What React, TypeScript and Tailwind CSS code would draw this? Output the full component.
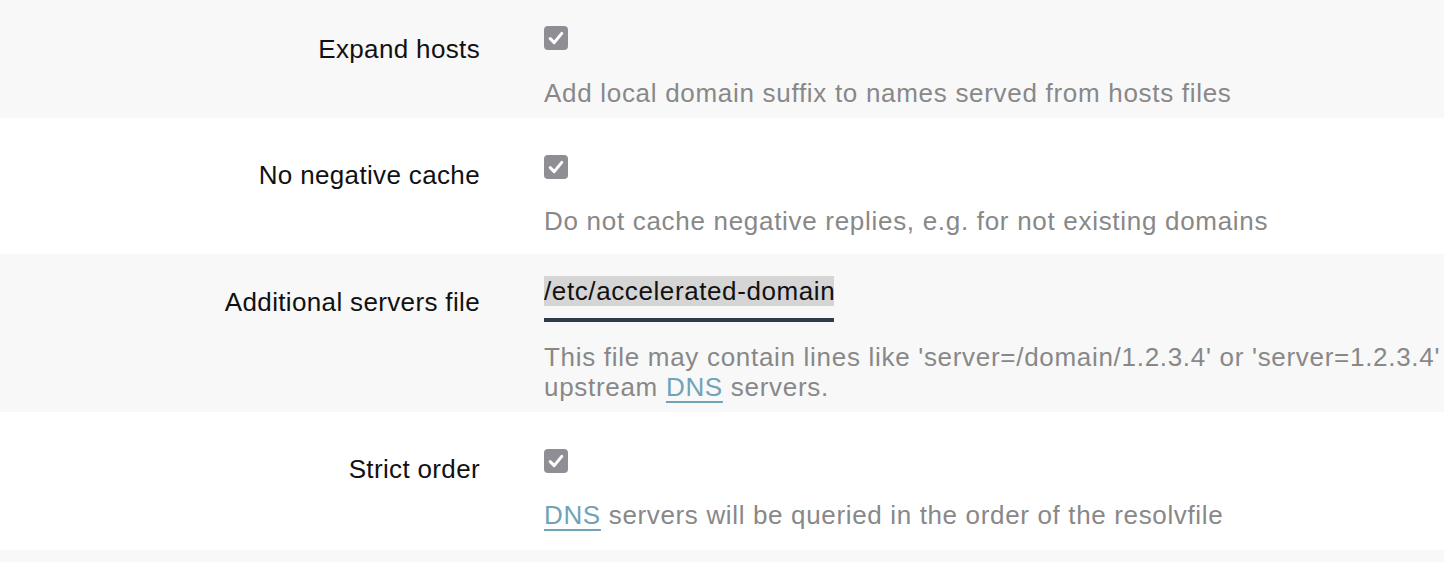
import React from "react";

const font = { fontFamily: '"Liberation Sans", Arial, sans-serif' };

function Check() {
  return (
    <div className="w-6 h-6 rounded-[4px] bg-[#8f8e94] flex items-center justify-center">
      <svg width="24" height="24" viewBox="0 0 24 24" fill="none">
        <path d="M6.2 12.6 L10.2 16.6 L17.8 7.4" stroke="#ffffff" strokeWidth="3" strokeLinecap="round" strokeLinejoin="round" />
      </svg>
    </div>
  );
}

function Label({ children, top }: { children: React.ReactNode; top: string }) {
  return (
    <div className={`w-[480px] shrink-0 text-right text-[26px] leading-[30px] text-[#111] tracking-[0.35px] ${top}`}>
      {children}
    </div>
  );
}

const Dns = () => <span className="text-[#6fa3b7] underline underline-offset-[5px] decoration-[1.5px]">DNS</span>;

export default function App() {
  return (
    <div className="w-[1444px] h-[562px] overflow-hidden bg-white" style={font}>
      {/* Row 1 */}
      <div className="flex bg-[#f8f8f8] h-[118px]">
        <Label top="mt-[34px]">Expand hosts</Label>
        <div className="ml-[64px] flex flex-col">
          <div className="mt-[26px]"><Check /></div>
          <div className="mt-[28px] text-[26px] leading-[30px] text-[#888] tracking-[0.7px] whitespace-nowrap">
            Add local domain suffix to names served from hosts files
          </div>
        </div>
      </div>
      {/* Row 2 */}
      <div className="flex bg-white h-[136px]">
        <Label top="mt-[42px]">No negative cache</Label>
        <div className="ml-[64px] flex flex-col">
          <div className="mt-[37px]"><Check /></div>
          <div className="mt-[27px] text-[26px] leading-[30px] text-[#888] tracking-[0.7px] whitespace-nowrap">
            Do not cache negative replies, e.g. for not existing domains
          </div>
        </div>
      </div>
      {/* Row 3 */}
      <div className="flex bg-[#f8f8f8] h-[158px]">
        <Label top="mt-[33px]">Additional servers file</Label>
        <div className="ml-[64px] flex flex-col">
          <div className="mt-[16px] w-[290px] overflow-hidden">
            <div className="h-[42px] pt-[6px] flex items-start border-b-4 border-[#2f3a4b] box-content">
              <span className="bg-[#d5d5d5] text-[26px] leading-[30px] text-[#111] whitespace-nowrap tracking-[0.6px]">
                /etc/accelerated-domains.china.conf
              </span>
            </div>
          </div>
          <div className="mt-[20px] text-[26px] leading-[30px] text-[#888] tracking-[0.7px] whitespace-nowrap">
            <div>This file may contain lines like 'server=/domain/1.2.3.4' or 'server=1.2.3.4' for domain-specific or full</div>
            <div>upstream <Dns /> servers.</div>
          </div>
        </div>
      </div>
      {/* Row 4 */}
      <div className="flex bg-white h-[138px]">
        <Label top="mt-[42px]">Strict order</Label>
        <div className="ml-[64px] flex flex-col">
          <div className="mt-[37px]"><Check /></div>
          <div className="mt-[27px] text-[26px] leading-[30px] text-[#888] tracking-[0.65px] whitespace-nowrap">
            <Dns /> servers will be queried in the order of the resolvfile
          </div>
        </div>
      </div>
      <div className="bg-[#f8f8f8] h-[12px]" />
    </div>
  );
}
